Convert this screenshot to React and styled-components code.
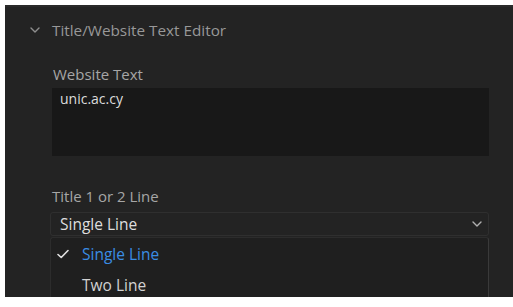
import styled, { createGlobalStyle } from "styled-components";

const GlobalStyle = createGlobalStyle`
  html, body {
    margin: 0;
    background: #ffffff;
  }
  body {
    font-family: "Open Sans", "Noto Sans", sans-serif;
    overflow: hidden;
  }
`;

const Page = styled.div`
  width: 513px;
  height: 307px;
  padding: 5px 0 0 5px;
  box-sizing: border-box;
`;

const Panel = styled.section`
  height: 292px;
  background: #232323;
  border-top: 2px solid #2a2a2a;
  box-sizing: border-box;
  overflow: hidden;
`;

const Header = styled.div`
  height: 46px;
  display: flex;
  align-items: center;
  gap: 12px;
  padding-left: 25px;
  color: #989898;
  font-size: 15.3px;
`;

const Body = styled.div`
  padding: 12px 24px 0 47px;
`;

const Label = styled.div`
  color: #a6a6a6;
  font-size: 15px;
  line-height: 18px;
  margin-top: ${(p) => p.$top || 0}px;
  padding-left: ${(p) => p.$indent || 0}px;
`;

const TextBox = styled.div`
  margin-top: 5px;
  height: 68px;
  background: #181818;
  padding: 2px 8px;
  box-sizing: border-box;
  color: #dcdcdc;
  font-size: 14px;
  line-height: 18px;
`;

const Select = styled.div`
  margin-top: 7px;
  height: 24px;
  margin-left: -2px;
  border: 1px solid #2f2f2f;
  border-radius: 3px;
  display: flex;
  align-items: center;
  justify-content: space-between;
  padding: 0 6px 0 9px;
  box-sizing: border-box;
  color: #dedede;
  font-size: 15.5px;
`;

const Menu = styled.ul`
  list-style: none;
  margin: 1px 0 0 -2px;
  padding: 0;
  height: 70px;
  background: #1f1f1f;
  border-left: 1px solid #2c2c2c;
  border-right: 1px solid #3a3a3a;
  border-top: 1px solid #2c2c2c;
  border-radius: 3px 3px 0 0;
`;

const Item = styled.li`
  height: 31px;
  display: flex;
  align-items: center;
  padding-left: 6px;
  font-size: 15.5px;
  color: ${(p) => (p.$selected ? "#3a8de4" : "#d2d2d2")};
`;

const Check = styled.span`
  width: 25px;
  display: flex;
  align-items: center;
`;

const Chevron = ({ color = "#9a9a9a" }) => (
  <svg width="10" height="6" viewBox="0 0 10 6" fill="none">
    <path d="M1 1l4 4 4-4" stroke={color} strokeWidth="1.4" strokeLinecap="round" strokeLinejoin="round" />
  </svg>
);

export default function App() {
  return (
    <>
      <GlobalStyle />
      <Page>
        <Panel>
          <Header>
            <Chevron color="#8e8e8e" />
            <span>Title/Website Text Editor</span>
          </Header>
          <Body>
            <Label $indent={1}>Website Text</Label>
            <TextBox>unic.ac.cy</TextBox>
            <Label $top={31}>Title 1 or 2 Line</Label>
            <Select>
              <span>Single Line</span>
              <Chevron color="#b0b0b0" />
            </Select>
            <Menu>
              <Item $selected>
                <Check>
                  <svg width="12" height="10" viewBox="0 0 12 10" fill="none">
                    <path d="M1 5.5l3.2 3L11 1.5" stroke="#e0e0e0" strokeWidth="1.6" strokeLinecap="round" strokeLinejoin="round" />
                  </svg>
                </Check>
                Single Line
              </Item>
              <Item>
                <Check />
                Two Line
              </Item>
            </Menu>
          </Body>
        </Panel>
      </Page>
    </>
  );
}
